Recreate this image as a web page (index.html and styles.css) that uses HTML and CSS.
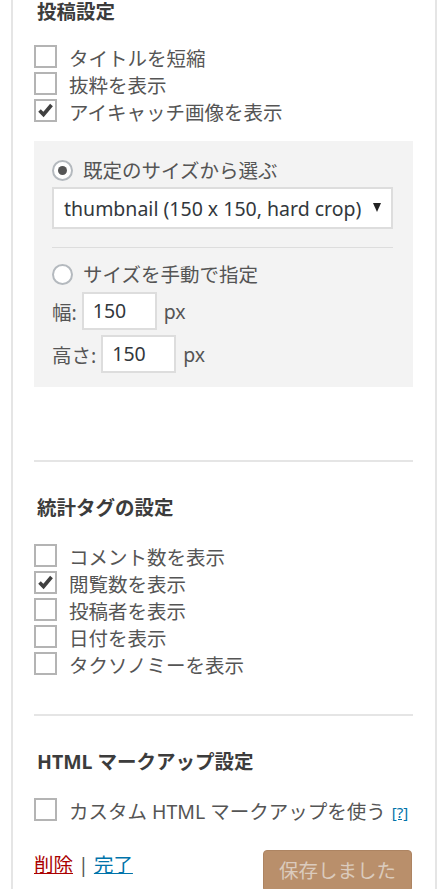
FILE: index.html
```html
<!DOCTYPE html>
<html lang="ja">
<head>
    <meta charset="UTF-8">
    <meta name="viewport" content="width=device-width, initial-scale=1.0">
    <title>ウィジェット設定</title>
    <link rel="stylesheet" href="styles.css">
</head>
<body>
    <div class="widget-inside">
        <h3 class="section-title first">投稿設定</h3>
        <div class="checks">
            <label class="check-row"><span class="box"></span>タイトルを短縮</label>
            <label class="check-row"><span class="box"></span>抜粋を表示</label>
            <label class="check-row"><span class="box checked"><svg viewBox="0 0 19 19"><path d="M3.5 9.5 L7.5 13.5 L15.5 4" /></svg></span>アイキャッチ画像を表示</label>
        </div>

        <div class="thumb-box">
            <label class="radio-row"><span class="radio on"></span>既定のサイズから選ぶ</label>
            <div class="select">
                <span>thumbnail (150 x 150, hard crop)</span>
                <span class="arrow"></span>
            </div>
            <hr class="inner-line">
            <label class="radio-row"><span class="radio"></span>サイズを手動で指定</label>
            <div class="size-row first-size">幅: <span class="num">150</span> px</div>
            <div class="size-row">高さ: <span class="num">150</span> px</div>
        </div>

        <hr class="section-line first-line">

        <h3 class="section-title">統計タグの設定</h3>
        <div class="checks">
            <label class="check-row"><span class="box"></span>コメント数を表示</label>
            <label class="check-row"><span class="box checked"><svg viewBox="0 0 19 19"><path d="M3.5 9.5 L7.5 13.5 L15.5 4" /></svg></span>閲覧数を表示</label>
            <label class="check-row"><span class="box"></span>投稿者を表示</label>
            <label class="check-row"><span class="box"></span>日付を表示</label>
            <label class="check-row"><span class="box"></span>タクソノミーを表示</label>
        </div>

        <hr class="section-line">

        <h3 class="section-title">HTML マークアップ設定</h3>
        <div class="checks last-checks">
            <label class="check-row"><span class="box"></span>カスタム HTML マークアップを使う<a class="help" href="#">[?]</a></label>
        </div>

        <div class="control-actions">
            <div class="links"><a class="delete" href="#">削除</a> | <a class="done" href="#">完了</a></div>
            <button class="save" type="button">保存しました</button>
        </div>
    </div>
</body>
</html>
```

FILE: styles.css
```css
body {
    margin: 0;
    background-color: #fff;
    font-family: "Noto Sans", "Noto Sans CJK JP", sans-serif;
    font-size: 19.5px;
    color: #555;
}
.widget-inside {
    margin-left: 11px;
    width: 379px;
    min-height: 889px;
    border-left: 2px solid #e5e5e5;
    border-right: 2px solid #e5e5e5;
    padding: 0 22px 0 21px;
}
.section-title {
    margin: 38px 0 0 3px;
    font-size: 19.5px;
    line-height: 20px;
    font-weight: bold;
    color: #3c3c3c;
}
.section-title.first {
    margin-top: 0;
    padding-top: 2px;
}
.checks {
    margin-top: 26px;
}
.section-title.first + .checks {
    margin-top: 23px;
}
.check-row {
    display: flex;
    align-items: flex-start;
    height: 27px;
    line-height: 28px;
    white-space: nowrap;
}
.box {
    box-sizing: border-box;
    width: 23px;
    height: 23px;
    margin-right: 12px;
    border: 2px solid #b4b4b4;
    background: #fff;
    flex: none;
}
.box svg {
    display: block;
    width: 19px;
    height: 19px;
}
.box path {
    fill: none;
    stroke: #404040;
    stroke-width: 3.6;
}
.help {
    margin-left: 6px;
    font-size: 15px;
    color: #0073aa;
}
.thumb-box {
    margin-top: 15px;
    padding: 16px 20px 14px 18px;
    background-color: #f3f3f3;
}
.radio-row {
    display: flex;
    align-items: center;
    height: 27px;
    line-height: 27px;
}
.radio {
    box-sizing: border-box;
    width: 21px;
    height: 21px;
    margin-right: 10px;
    border: 2px solid #b4b9be;
    border-radius: 50%;
    background: #fff;
    display: flex;
    align-items: center;
    justify-content: center;
}
.radio.on::after {
    content: "";
    width: 9px;
    height: 9px;
    border-radius: 50%;
    background: #555;
}
.select {
    box-sizing: border-box;
    margin-top: 3px;
    height: 42px;
    padding: 0 10px 0 10px;
    border: 2px solid #ddd;
    background: #fff;
    display: flex;
    align-items: center;
    justify-content: space-between;
    color: #32373c;
    white-space: nowrap;
}
.arrow {
    width: 0;
    height: 0;
    border-left: 4.5px solid transparent;
    border-right: 4.5px solid transparent;
    border-top: 9px solid #222;
    margin-top: -2px;
}
.inner-line {
    margin: 18px 0 0;
    border: 0;
    border-top: 1px solid #ddd;
}
.inner-line + .radio-row {
    margin-top: 13px;
}
.size-row {
    display: flex;
    align-items: center;
    gap: 5px;
    margin-top: 5px;
}
.size-row.first-size {
    margin-top: 4px;
}
.num {
    box-sizing: border-box;
    width: 75px;
    height: 38px;
    line-height: 34px;
    padding-left: 9px;
    margin-right: 2px;
    border: 2px solid #ddd;
    background: #fff;
    color: #32373c;
}
.section-line {
    margin: 35px 0 0;
    border: 0;
    border-top: 2px solid #e5e5e5;
}
.section-line.first-line {
    margin-top: 73px;
}
.section-line + .section-title {
    margin-top: 36px;
}
.control-actions {
    margin-top: 25px;
    display: flex;
    justify-content: space-between;
    align-items: flex-start;
}
.links {
    line-height: 27px;
    padding-top: 1px;
}
.links a {
    text-decoration: underline;
}
.delete {
    color: #a00;
}
.done {
    color: #0073aa;
}
.save {
    width: 149px;
    height: 42px;
    margin-right: 1px;
    padding: 0;
    border: 1px solid #ad8462;
    border-radius: 4px;
    background-color: #b98f6b;
    color: #dbcbbd;
    font-family: "Noto Sans", "Noto Sans CJK JP", sans-serif;
    font-size: 19.5px;
    line-height: 40px;
}
```
